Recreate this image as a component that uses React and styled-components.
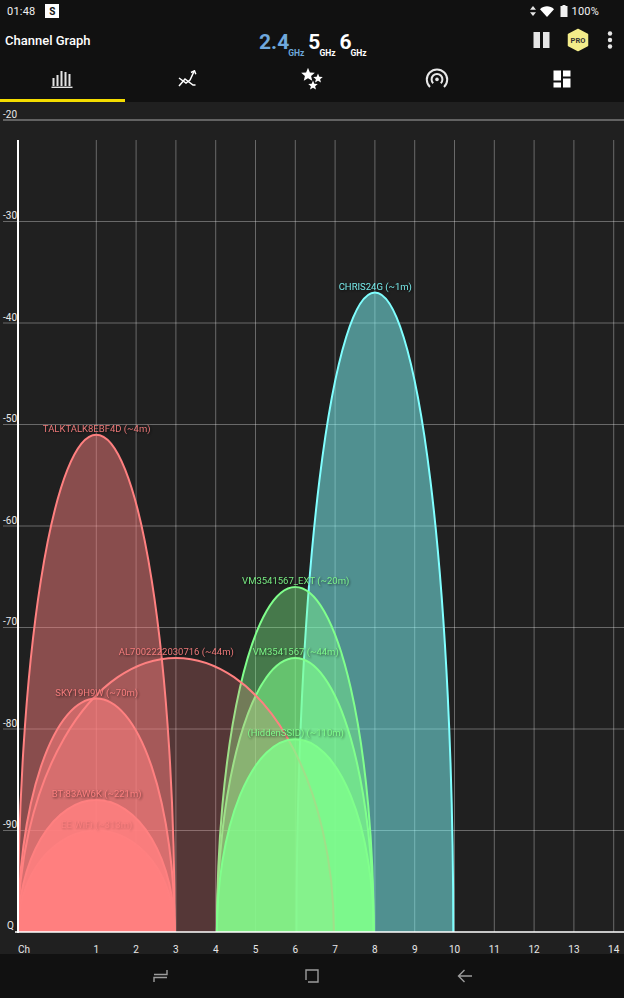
import React from "react";
import styled, { createGlobalStyle } from "styled-components";

const GlobalStyle = createGlobalStyle`
  html, body {
    margin: 0;
    padding: 0;
    background: #111111;
    font-family: Roboto, "Liberation Sans", sans-serif;
  }
`;

const channelX = (ch) => 96.3 + 39.8 * (ch - 1);
const dbmY = (dbm) => 120 + (-dbm - 20) * 10.15;
const BASE_Y = 932;
const ARC_INSET = 1.2;
const AXIS_X = 18;

const RED = "#ff8080";
const GREEN = "#80ff8c";
const CYAN = "#80ffff";

// strongest first, the same order the app paints them in
const networks = [
  { label: "CHRIS24G (~1m)", ch: 8, width: 2, dbm: -37, color: CYAN, fill: 0.5 },
  { label: "TALKTALK8EBF4D (~4m)", ch: 1, width: 2, dbm: -51, color: RED, fill: 0.47 },
  { label: "VM3541567_EXT (~20m)", ch: 6, width: 2, dbm: -66, color: GREEN, fill: 0.4 },
  { label: "VM3541567 (~44m)", ch: 6, width: 2, dbm: -73, color: GREEN, fill: 0.55 },
  { label: "AL7002222030716 (~44m)", ch: 3, width: 4, dbm: -73, color: RED, fill: 0.24 },
  { label: "SKY19H9W (~70m)", ch: 1, width: 2, dbm: -77, color: RED, fill: 0.55 },
  { label: "(HiddenSSID) (~110m)", ch: 6, width: 2, dbm: -81, color: GREEN, fill: 0.75 },
  { label: "BT:83AW6K (~221m)", ch: 1, width: 2, dbm: -87, color: RED, fill: 0.85 },
  { label: "EE WiFi (~313m)", ch: 1, width: 2, dbm: -90, color: RED, fill: 0.9, faint: true },
];

const dbmTicks = [-20, -30, -40, -50, -60, -70, -80, -90];
const channels = [1, 2, 3, 4, 5, 6, 7, 8, 9, 10, 11, 12, 13, 14];

const Screen = styled.div`
  width: 624px;
  height: 998px;
  display: flex;
  flex-direction: column;
  background: #111111;
  color: #fff;
  overflow: hidden;
`;

const StatusBar = styled.div`
  height: 22px;
  padding: 0 25px 0 7px;
  display: flex;
  align-items: center;
  font-size: 11px;
  letter-spacing: 0.2px;
  color: #f2f2f2;
`;

const StatusBadge = styled.span`
  width: 14px;
  height: 14px;
  margin-left: 10px;
  background: #fff;
  color: #111;
  font-size: 10px;
  font-weight: 700;
  display: flex;
  align-items: center;
  justify-content: center;
`;

const StatusRight = styled.div`
  margin-left: auto;
  display: flex;
  align-items: center;
  gap: 4px;
`;

const Toolbar = styled.div`
  height: 37px;
  padding: 0 11px 0 5px;
  display: flex;
  align-items: center;
`;

const Title = styled.div`
  width: 254px;
  font-size: 13px;
  font-weight: 500;
  margin-bottom: 1px;
`;

const Bands = styled.div`
  display: flex;
  align-items: flex-end;
  gap: 4px;
  padding-top: 3px;
`;

const Band = styled.div`
  display: flex;
  align-items: flex-end;
  color: ${(p) => (p.$active ? "#6fa8dc" : "#ffffff")};
`;

const BandValue = styled.span`
  font-size: 21px;
  font-weight: 700;
  line-height: 24px;
`;

const BandUnit = styled.span`
  font-size: 8.5px;
  font-weight: 700;
  line-height: 9px;
  margin: 0 0 -4px -1px;
`;

const Actions = styled.div`
  margin-left: auto;
  margin-bottom: 2px;
  display: flex;
  align-items: center;
`;

const Tabs = styled.div`
  height: 43px;
  display: grid;
  grid-template-columns: repeat(5, 1fr);
`;

const Tab = styled.div`
  display: flex;
  align-items: center;
  justify-content: center;
  box-sizing: border-box;
  border-bottom: 3px solid ${(p) => (p.$active ? "#f4dc00" : "transparent")};
`;

const Chart = styled.svg`
  display: block;
  width: 624px;
  height: 852px;
  background: #202020;
`;

const AxisText = styled.text`
  font-family: Roboto, "Liberation Sans", sans-serif;
  font-size: 10px;
  fill: #e8e8e8;
`;

const NetworkLabel = styled.text`
  font-family: Roboto, "Liberation Sans", sans-serif;
  font-size: 9.5px;
  text-anchor: middle;
  fill: ${(p) => p.$color};
  opacity: ${(p) => (p.$faint ? 0.35 : 0.9)};
  filter: drop-shadow(1px 1px 1px rgba(0, 0, 0, 0.7));
`;

const NavBar = styled.div`
  height: 44px;
  display: grid;
  grid-template-columns: repeat(3, 152px);
  justify-content: center;
  align-items: center;
  justify-items: center;
`;

const PauseIcon = () => (
  <svg width="18" height="18" viewBox="0 0 18 18">
    <rect x="1.5" y="1" width="6.5" height="16" fill="#e6e6e6" />
    <rect x="11" y="1" width="6.5" height="16" fill="#e6e6e6" />
  </svg>
);

const ProBadge = () => (
  <svg width="22" height="24" viewBox="0 0 22 24" style={{ marginLeft: 17 }}>
    <path
      d="M11 1.5 20.5 6.5V17.5L11 22.5 1.5 17.5V6.5Z"
      fill="#f3ec8a"
      stroke="#f3ec8a"
      strokeWidth="1.5"
      strokeLinejoin="round"
    />
    <text x="11" y="15" textAnchor="middle" fontSize="7.5" fontWeight="700" fontFamily="Roboto, sans-serif" fill="#333">
      PRO
    </text>
  </svg>
);

const MoreIcon = () => (
  <svg width="6" height="18" viewBox="0 0 6 18" style={{ marginLeft: 18 }}>
    <circle cx="3" cy="2.5" r="2.2" fill="#e6e6e6" />
    <circle cx="3" cy="9" r="2.2" fill="#e6e6e6" />
    <circle cx="3" cy="15.5" r="2.2" fill="#e6e6e6" />
  </svg>
);

const BarsIcon = () => (
  <svg width="22" height="20" viewBox="0 0 22 20" fill="#e4e4e4">
    <rect x="1.5" y="9" width="2" height="8" />
    <rect x="5.5" y="6" width="2" height="11" />
    <rect x="9.5" y="2" width="2" height="15" />
    <rect x="13.5" y="3" width="2" height="14" />
    <rect x="17.5" y="5" width="2" height="12" />
    <rect x="0.5" y="17.6" width="21" height="1.4" />
  </svg>
);

const TimeIcon = () => (
  <svg width="20" height="18" viewBox="0 0 20 18" fill="none" stroke="#fff" strokeWidth="1.5">
    <path d="M2 16 8 9 16 15H18.5" />
    <path d="M2 8 9 13 13 10 17 1.5" />
    <path d="M14 2.5 17.5 .8 18.8 4.2" />
  </svg>
);

const starPath = (cx, cy, r) => {
  const pts = [];
  for (let i = 0; i < 10; i++) {
    const a = (Math.PI / 5) * i - Math.PI / 2;
    const d = i % 2 ? r * 0.45 : r;
    pts.push(`${cx + d * Math.cos(a)} ${cy + d * Math.sin(a)}`);
  }
  return `M${pts.join("L")}Z`;
};

const StarsIcon = () => (
  <svg width="24" height="22" viewBox="0 0 24 22" fill="#fff">
    <path d={starPath(8, 7, 7.2)} />
    <path d={starPath(18, 10.5, 5)} />
    <path d={starPath(13, 17.5, 5)} />
  </svg>
);

const AccessPointIcon = () => (
  <svg width="24" height="24" viewBox="0 0 24 24" fill="none" stroke="#e8e8e8" strokeWidth="2">
    <path d="M5 20A10.2 10.2 0 1 1 19 20" />
    <path d="M8.2 16.2A5.4 5.4 0 1 1 15.8 16.2" />
    <circle cx="12" cy="12.4" r="1.8" fill="#e8e8e8" stroke="none" />
  </svg>
);

const TilesIcon = () => (
  <svg width="18" height="18" viewBox="0 0 18 18" fill="#fff">
    <rect x="0.5" y="0.5" width="7.5" height="10" />
    <rect x="10" y="0.5" width="7.5" height="6" />
    <rect x="0.5" y="12.5" width="7.5" height="5" />
    <rect x="10" y="8.5" width="7.5" height="9" />
  </svg>
);

const SyncArrows = () => (
  <svg width="6" height="10" viewBox="0 0 6 10" fill="#e8e8e8">
    <path d="M3 0 6 3.8H0Z" />
    <path d="M3 10 0 6.2H6Z" />
  </svg>
);

const WifiIcon = () => (
  <svg width="14" height="11" viewBox="0 0 14 11" fill="#fff">
    <path d="M0 3.2C4 -0.6 10 -0.6 14 3.2L7 11Z" />
  </svg>
);

const BatteryIcon = () => (
  <svg width="8" height="12" viewBox="0 0 8 12" fill="#f0f0f0" style={{ marginLeft: 2 }}>
    <path d="M2.5 0H5.5V1H7.5V12H0.5V1H2.5Z" />
  </svg>
);

const RecentsIcon = () => (
  <svg width="15" height="14" viewBox="0 0 15 14" fill="none" stroke="#9c9c9c" strokeWidth="1.4">
    <path d="M1 13V8.5H14" />
    <path d="M1 5.5H14V1" />
  </svg>
);

const HomeIcon = () => (
  <svg width="14" height="14" viewBox="0 0 14 14" fill="none" stroke="#9c9c9c" strokeWidth="1.4">
    <path d="M1 11V1H13V13H3" />
  </svg>
);

const BackIcon = () => (
  <svg width="15" height="14" viewBox="0 0 15 14" fill="none" stroke="#9c9c9c" strokeWidth="1.4">
    <path d="M15 7H1.5M7.5 1 1.5 7 7.5 13" />
  </svg>
);

const arcPath = (n) => {
  const x0 = channelX(n.ch - n.width) + ARC_INSET;
  const x1 = channelX(n.ch + n.width) - ARC_INSET;
  const rx = (x1 - x0) / 2;
  const ry = BASE_Y - dbmY(n.dbm);
  return `M${x0} ${BASE_Y}A${rx} ${ry} 0 0 1 ${x1} ${BASE_Y}`;
};

const ChannelChart = () => (
  <Chart viewBox="0 102 624 852">
    <defs>
      <clipPath id="plot">
        <rect x={AXIS_X} y="102" width={624 - AXIS_X} height={BASE_Y - 102} />
      </clipPath>
    </defs>

    {dbmTicks.map((d) => (
      <line
        key={d}
        x1="3"
        x2="624"
        y1={dbmY(d)}
        y2={dbmY(d)}
        stroke="#fff"
        strokeOpacity={d === -20 ? 0.4 : 0.33}
        strokeWidth={d === -20 ? 1.5 : 1}
      />
    ))}
    {channels.map((c) => (
      <line
        key={c}
        x1={channelX(c)}
        x2={channelX(c)}
        y1="140"
        y2={BASE_Y}
        stroke="#fff"
        strokeOpacity="0.33"
      />
    ))}

    <g clipPath="url(#plot)">
      {networks.map((n) => (
        <path
          key={n.label}
          d={arcPath(n)}
          fill={n.color}
          fillOpacity={n.fill}
          stroke={n.color}
          strokeWidth="2"
        />
      ))}
    </g>

    <line x1={AXIS_X} x2={AXIS_X} y1="140" y2={BASE_Y + 1} stroke="#fff" strokeWidth="2" />
    <line x1="15" x2="624" y1={BASE_Y} y2={BASE_Y} stroke="#fff" strokeWidth="1.5" />

    {networks.map((n) => (
      <NetworkLabel key={n.label} x={channelX(n.ch) + 0.4} y={dbmY(n.dbm) - 3} $color={n.color} $faint={n.faint}>
        {n.label}
      </NetworkLabel>
    ))}

    {dbmTicks.map((d) => (
      <AxisText key={d} x="3" y={dbmY(d) - 2.5}>
        {d}
      </AxisText>
    ))}
    <AxisText x="7" y="929">
      Q
    </AxisText>
    <AxisText x="18" y="953">
      Ch
    </AxisText>
    {channels.map((c) => (
      <AxisText key={c} x={channelX(c)} y="953" textAnchor="middle">
        {c}
      </AxisText>
    ))}
  </Chart>
);

export default function App() {
  return (
    <Screen>
      <GlobalStyle />
      <StatusBar>
        01:48
        <StatusBadge>S</StatusBadge>
        <StatusRight>
          <SyncArrows />
          <WifiIcon />
          <BatteryIcon />
          100%
        </StatusRight>
      </StatusBar>
      <Toolbar>
        <Title>Channel Graph</Title>
        <Bands>
          <Band $active>
            <BandValue>2.4</BandValue>
            <BandUnit>GHz</BandUnit>
          </Band>
          <Band>
            <BandValue>5</BandValue>
            <BandUnit>GHz</BandUnit>
          </Band>
          <Band>
            <BandValue>6</BandValue>
            <BandUnit>GHz</BandUnit>
          </Band>
        </Bands>
        <Actions>
          <PauseIcon />
          <ProBadge />
          <MoreIcon />
        </Actions>
      </Toolbar>
      <Tabs>
        <Tab $active>
          <BarsIcon />
        </Tab>
        <Tab>
          <TimeIcon />
        </Tab>
        <Tab>
          <StarsIcon />
        </Tab>
        <Tab>
          <AccessPointIcon />
        </Tab>
        <Tab>
          <TilesIcon />
        </Tab>
      </Tabs>
      <ChannelChart />
      <NavBar>
        <RecentsIcon />
        <HomeIcon />
        <BackIcon />
      </NavBar>
    </Screen>
  );
}
